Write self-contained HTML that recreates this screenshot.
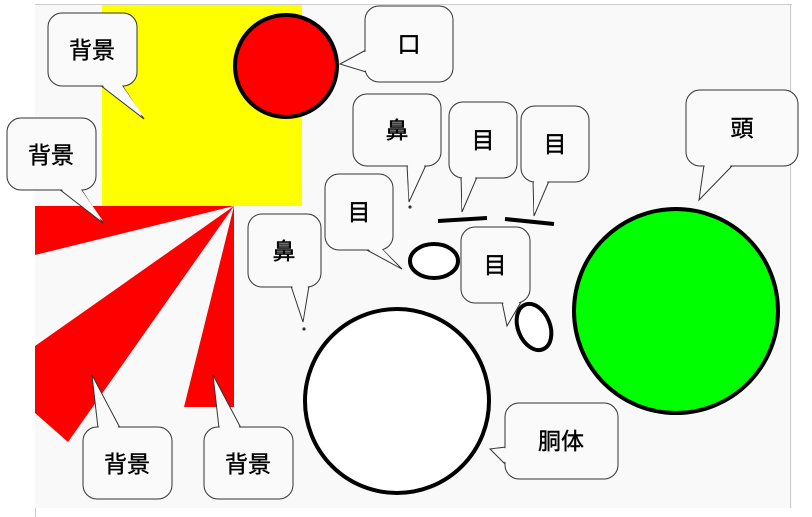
<!DOCTYPE html>
<html><head><meta charset="utf-8"><style>
html,body{margin:0;padding:0;background:#fff;width:812px;height:517px;overflow:hidden}
svg{display:block}
text{font-family:"Liberation Sans","Noto Sans CJK JP",sans-serif;font-size:23px;fill:#000;stroke:#000;stroke-width:0.4;text-anchor:middle;dominant-baseline:central}
.b{fill:#fafafa;stroke:#333;stroke-width:1}
.t{fill:#fafafa;stroke:none}
</style></head><body>
<svg width="812" height="517" viewBox="0 0 812 517">
<rect x="35" y="4" width="757" height="504" fill="#f9f9f9"/>
<line x1="35" y1="4.5" x2="792" y2="4.5" stroke="#ccc"/>
<line x1="790.5" y1="4" x2="790.5" y2="508" stroke="#ccc"/>
<line x1="35.5" y1="508" x2="35.5" y2="517" stroke="#ccc"/>
<rect x="102" y="5" width="200" height="201" fill="#ffff00"/>
<polygon points="35,206 234,206 35,255" fill="#f00"/>
<polygon points="234,206 35,346 35,413 68,442" fill="#f00"/>
<polygon points="234,206 234,407 184,407" fill="#f00"/>
<circle cx="286" cy="66" r="51" fill="#f00" stroke="#000" stroke-width="4"/>
<circle cx="397" cy="401" r="92" fill="#fff" stroke="#000" stroke-width="4"/>
<circle cx="676" cy="311" r="102" fill="#0f0" stroke="#000" stroke-width="4"/>
<ellipse cx="434" cy="261" rx="24" ry="17" fill="#fff" stroke="#000" stroke-width="4"/>
<ellipse cx="534" cy="327" rx="16" ry="24" transform="rotate(-22 534 327)" fill="#fff" stroke="#000" stroke-width="4"/>
<line x1="438" y1="221" x2="487" y2="218" stroke="#000" stroke-width="4"/>
<line x1="505" y1="219" x2="554" y2="224" stroke="#000" stroke-width="4"/>
<circle cx="410" cy="207" r="1.6" fill="#333"/>
<circle cx="304" cy="329" r="1.6" fill="#333"/>

<g>
<polygon class="b" points="100,85 144,119 122,85"/>
<rect class="b" x="48" y="13" width="89" height="73" rx="14"/>
<polygon class="t" points="101,84 144,117 121,84"/>
<text x="92" y="50">背景</text>
</g>
<g>
<polygon class="b" points="59,189 103,223 81,189"/>
<rect class="b" x="7" y="118" width="89" height="72" rx="14"/>
<polygon class="t" points="60,188 103,221 80,188"/>
<text x="51" y="155">背景</text>
</g>
<g>
<polygon class="b" points="366,50 340,64 366,72"/>
<rect class="b" x="365" y="6" width="88" height="76" rx="14"/>
<polygon class="t" points="367,51 342,64 367,71"/>
<text x="409" y="44">口</text>
</g>
<g>
<polygon class="b" points="407,165 409,202 426,165"/>
<rect class="b" x="353" y="94" width="88" height="72" rx="14"/>
<polygon class="t" points="408,164 409,199 425,164"/>
<text x="397" y="130">鼻</text>
</g>
<g>
<polygon class="b" points="461,177 462,212 477,177"/>
<rect class="b" x="449" y="102" width="68" height="76" rx="14"/>
<polygon class="t" points="462,176 462,209 476,176"/>
<text x="483" y="140">目</text>
</g>
<g>
<polygon class="b" points="533,181 534,216 549,181"/>
<rect class="b" x="521" y="106" width="68" height="76" rx="14"/>
<polygon class="t" points="534,180 534,213 548,180"/>
<text x="555" y="144">目</text>
</g>
<g>
<polygon class="b" points="704,165 699,200 733,165"/>
<rect class="b" x="686" y="90" width="112" height="76" rx="14"/>
<polygon class="t" points="705,164 700,197 732,164"/>
<text x="742" y="128">頭</text>
</g>
<g>
<polygon class="b" points="365,249 402,269 382,249"/>
<rect class="b" x="325" y="174" width="68" height="76" rx="14"/>
<polygon class="t" points="366,248 399,267 381,248"/>
<text x="359" y="212">目</text>
</g>
<g>
<polygon class="b" points="291,286 303,322 309,286"/>
<rect class="b" x="248" y="214" width="73" height="73" rx="14"/>
<polygon class="t" points="292,285 303,319 308,285"/>
<text x="284" y="251">鼻</text>
</g>
<g>
<polygon class="b" points="502,302 507,326 521,302"/>
<rect class="b" x="461" y="227" width="69" height="76" rx="14"/>
<polygon class="t" points="503,301 507,323 520,301"/>
<text x="495" y="265">目</text>
</g>
<g>
<polygon class="b" points="98,428 92,375 120,428"/>
<rect class="b" x="83" y="427" width="89" height="72" rx="14"/>
<polygon class="t" points="99,429 93,378 119,429"/>
<text x="127" y="464">背景</text>
</g>
<g>
<polygon class="b" points="219,428 213,375 241,428"/>
<rect class="b" x="204" y="427" width="89" height="72" rx="14"/>
<polygon class="t" points="220,429 214,378 240,429"/>
<text x="248" y="464">背景</text>
</g>
<g>
<polygon class="b" points="506,447 490,449 506,465"/>
<rect class="b" x="505" y="403" width="113" height="76" rx="14"/>
<polygon class="t" points="507,448 493,449 507,464"/>
<text x="561" y="441">胴体</text>
</g>
</svg>
</body></html>
